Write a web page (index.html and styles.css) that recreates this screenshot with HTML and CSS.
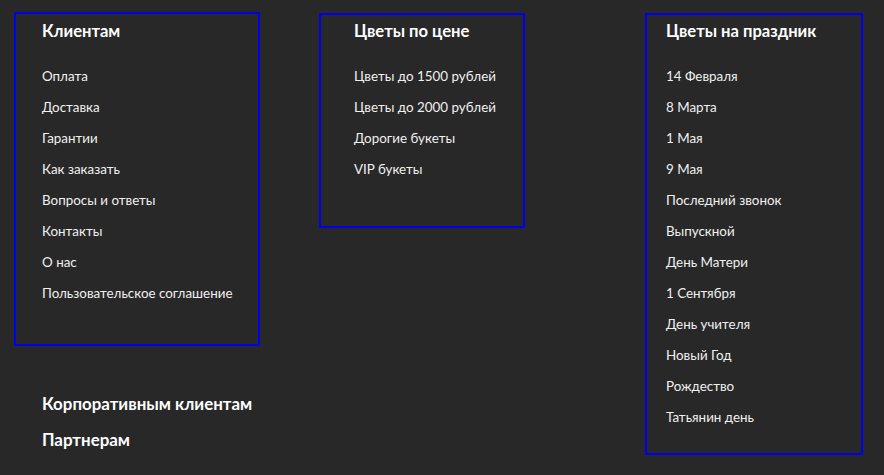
FILE: index.html
```html
<!DOCTYPE html>
<html lang="ru">
<head>
<meta charset="utf-8">
<link rel="stylesheet" href="styles.css">
</head>
<body>
<footer class="footer">
  <div class="col col-clients">
    <div class="box box-clients">
      <h3 class="title">Клиентам</h3>
      <ul class="list">
        <li>Оплата</li>
        <li>Доставка</li>
        <li>Гарантии</li>
        <li>Как заказать</li>
        <li>Вопросы и ответы</li>
        <li>Контакты</li>
        <li>О нас</li>
        <li>Пользовательское соглашение</li>
      </ul>
    </div>
    <div class="extra">
      <div class="extra-link">Корпоративным клиентам</div>
      <div class="extra-link">Партнерам</div>
    </div>
  </div>
  <div class="box box-price">
    <h3 class="title">Цветы по цене</h3>
    <ul class="list">
      <li>Цветы до 1500 рублей</li>
      <li>Цветы до 2000 рублей</li>
      <li>Дорогие букеты</li>
      <li>VIP букеты</li>
    </ul>
  </div>
  <div class="box box-holiday">
    <h3 class="title">Цветы на праздник</h3>
    <ul class="list">
      <li>14 Февраля</li>
      <li>8 Марта</li>
      <li>1 Мая</li>
      <li>9 Мая</li>
      <li>Последний звонок</li>
      <li>Выпускной</li>
      <li>День Матери</li>
      <li>1 Сентября</li>
      <li>День учителя</li>
      <li>Новый Год</li>
      <li>Рождество</li>
      <li>Татьянин день</li>
    </ul>
  </div>
</footer>
</body>
</html>
```
FILE: styles.css
```css
html, body {
  margin: 0;
  padding: 0;
  background: #282828;
}
body {
  width: 884px;
  height: 475px;
  overflow: hidden;
  font-family: Lato, "Open Sans", sans-serif;
  color: #f2f2f2;
}
.footer {
  display: flex;
  align-items: flex-start;
  padding-top: 12px;
}
.box {
  border: 2px solid #0000f0;
  box-sizing: border-box;
}
.col-clients {
  margin-left: 14px;
  width: 246px;
}
.box-clients {
  padding: 7px 0 35px 26px;
}
.box-price {
  margin-left: 59px;
  margin-top: 1px;
  width: 206px;
  padding: 6px 0 41px 33px;
}
.box-holiday {
  margin-left: 120px;
  margin-top: 1px;
  width: 218px;
  padding: 6px 0 20px 19px;
}
.title {
  margin: 0;
  font-size: 16.6px;
  line-height: 20px;
  font-weight: 700;
  color: #ffffff;
}
.list {
  list-style: none;
  margin: 20px 0 0;
  padding: 0;
}
.list li {
  font-size: 13.4px;
  line-height: 31px;
  color: #f0f0f0;
}
.extra {
  margin-top: 48px;
  padding-left: 28px;
}
.extra-link {
  font-size: 16.9px;
  font-weight: 700;
  line-height: 20px;
  color: #ffffff;
  margin-bottom: 16px;
}
```
